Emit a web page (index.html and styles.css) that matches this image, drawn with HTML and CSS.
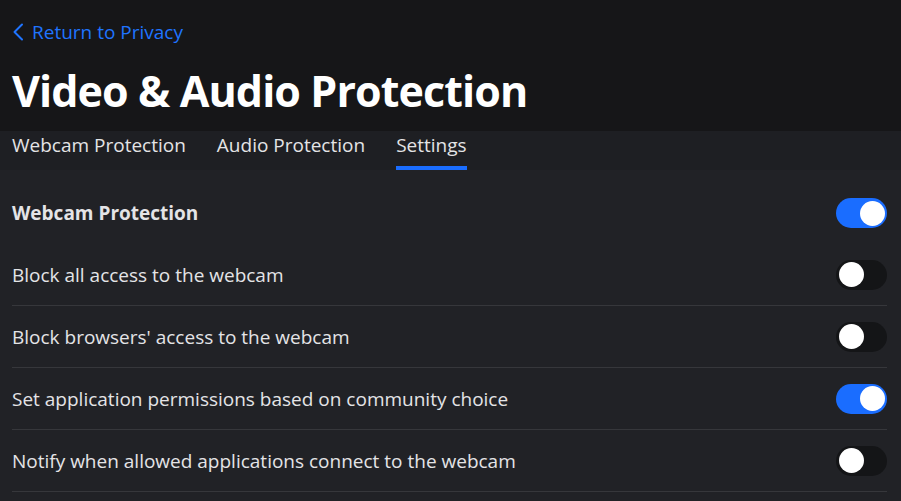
FILE: index.html
```html
<!DOCTYPE html>
<html lang="en">
<head>
<meta charset="utf-8">
<title>Video &amp; Audio Protection</title>
<link rel="stylesheet" href="styles.css">
</head>
<body>
<header class="header">
  <a class="back" href="#">
    <svg class="back-icon" viewBox="0 0 12 18" width="12" height="18"><path d="M10 1.5 L2.5 9 L10 16.5" fill="none" stroke="currentColor" stroke-width="2" stroke-linecap="round" stroke-linejoin="round"/></svg>
    <span>Return to Privacy</span>
  </a>
  <h1 class="title">Video &amp; Audio Protection</h1>
</header>
<nav class="tabs">
  <a class="tab" href="#">Webcam Protection</a>
  <a class="tab" href="#">Audio Protection</a>
  <a class="tab active" href="#">Settings</a>
</nav>
<main class="settings">
  <div class="row row-head">
    <span class="label bold">Webcam Protection</span>
    <span class="toggle on"><span class="knob"></span></span>
  </div>
  <div class="row">
    <span class="label">Block all access to the webcam</span>
    <span class="toggle"><span class="knob"></span></span>
  </div>
  <div class="row">
    <span class="label">Block browsers' access to the webcam</span>
    <span class="toggle"><span class="knob"></span></span>
  </div>
  <div class="row">
    <span class="label">Set application permissions based on community choice</span>
    <span class="toggle on"><span class="knob"></span></span>
  </div>
  <div class="row">
    <span class="label">Notify when allowed applications connect to the webcam</span>
    <span class="toggle"><span class="knob"></span></span>
  </div>
</main>
</body>
</html>
```
FILE: styles.css
```css
* { box-sizing: border-box; }
html, body { margin: 0; padding: 0; }
body {
  background: #212226;
  font-family: "Open Sans", "Noto Sans", sans-serif;
  color: #e4e4e6;
  width: 901px;
  height: 501px;
  overflow: hidden;
}
.header {
  background: #161618;
  height: 131px;
  padding: 19px 12px 0 12px;
}
.back {
  display: flex;
  align-items: center;
  gap: 8px;
  color: #1f74ff;
  text-decoration: none;
  font-size: 19px;
  height: 26px;
  line-height: 26px;
}
.back-icon { display: block; }
.title {
  margin: 18px 0 0 0;
  font-size: 43px;
  font-weight: 700;
  line-height: 56px;
  color: #ffffff;
  letter-spacing: -0.9px;
}
.tabs {
  display: flex;
  gap: 31px;
  height: 39px;
  padding: 0 12px;
  background: #1e1f23;
}
.tab {
  color: #e4e4e6;
  text-decoration: none;
  font-size: 19px;
  line-height: 28px;
  height: 39px;
  border-bottom: 4px solid transparent;
}
.tab.active { border-bottom-color: #1a6dff; }
.settings {
  padding: 12px 14px 0 12px;
}
.row {
  display: flex;
  align-items: center;
  justify-content: space-between;
  height: 62px;
  border-bottom: 1px solid #36373b;
}
.row-head { border-bottom: none; height: 62px; }
.label { font-size: 19px; }
.label.bold { font-weight: 700; }
.toggle {
  width: 51px;
  height: 30px;
  border-radius: 15px;
  background: #141517;
  padding: 2.5px;
  display: flex;
  justify-content: flex-start;
}
.toggle.on {
  background: #1a6dff;
  justify-content: flex-end;
}
.knob {
  width: 25px;
  height: 25px;
  border-radius: 50%;
  background: #ffffff;
}
```
